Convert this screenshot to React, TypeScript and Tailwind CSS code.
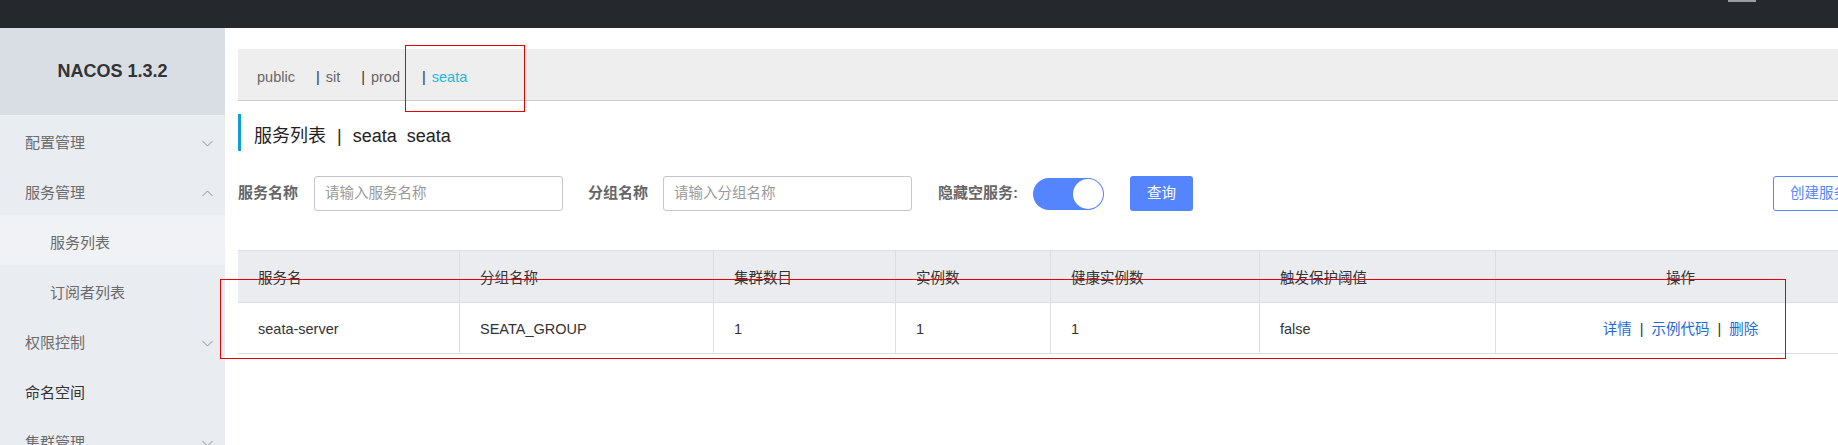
import React from "react";

const FONT = "font-['Liberation_Sans','Noto_Sans_CJK_SC',sans-serif]";

function Chevron({ up = false }: { up?: boolean }) {
  return (
    <svg width="11" height="7" viewBox="0 0 11 7" className="shrink-0">
      <polyline
        points={up ? "0.5,6 5.5,1 10.5,6" : "0.5,1 5.5,6 10.5,1"}
        fill="none"
        stroke="#8a8f99"
        strokeWidth="1"
      />
    </svg>
  );
}

function MenuItem({
  label,
  chevron,
  sub = false,
  active = false,
  dark = false,
}: {
  label: string;
  chevron?: "up" | "down";
  sub?: boolean;
  active?: boolean;
  dark?: boolean;
}) {
  return (
    <div
      className={`flex h-[50px] items-center pt-[6px] pr-[12px] ${sub ? "pl-[50px]" : "pl-[25px]"} ${active ? "bg-[#f1f2f6]" : ""}`}
    >
      <span className={`flex-1 text-[15px] ${dark ? "text-[#333]" : "text-[#6b6b6b]"}`}>
        {label}
      </span>
      {chevron && <Chevron up={chevron === "up"} />}
    </div>
  );
}

const cols = ["服务名", "分组名称", "集群数目", "实例数", "健康实例数", "触发保护阈值", "操作"];
const row = ["seata-server", "SEATA_GROUP", "1", "1", "1", "false"];
const grid =
  "grid grid-cols-[221px_254px_182px_155px_209px_236px_370px]";

export default function App() {
  return (
    <div className={`relative h-[445px] w-[1838px] overflow-hidden bg-white ${FONT}`}>
      {/* top bar */}
      <div className="relative h-[28px] bg-[#25292e]">
        <div className="absolute left-[1728px] top-0 h-[2px] w-[28px] bg-[#9a9c9f]" />
      </div>

      <div className="flex h-[417px]">
        {/* sidebar */}
        <aside className="w-[225px] shrink-0 bg-[#e9ecf1]">
          <div className="flex h-[87px] items-center justify-center bg-[#d9dde4] text-[18px] font-bold text-[#333]">
            NACOS 1.3.2
          </div>
          <MenuItem label="配置管理" chevron="down" />
          <MenuItem label="服务管理" chevron="up" />
          <MenuItem label="服务列表" sub active />
          <MenuItem label="订阅者列表" sub />
          <MenuItem label="权限控制" chevron="down" />
          <MenuItem label="命名空间" dark />
          <MenuItem label="集群管理" chevron="down" />
        </aside>

        {/* main */}
        <main className="w-[1640px] shrink-0 pl-[13px] pt-[21px]">
          {/* namespace tabs */}
          <div className="flex h-[52px] items-center border-b border-[#cccccc] bg-[#eeeeee] pl-[19px] pt-[7px] text-[14.5px]">
            <span className="text-[#666] mr-[21px]">public</span>
            <span className="text-[#333] mr-[6px]">|</span>
            <span className="text-[#666] mr-[21px]">sit</span>
            <span className="text-[#333] mr-[6px]">|</span>
            <span className="text-[#666] mr-[22px]">prod</span>
            <span className="text-[#333] mr-[6px]">|</span>
            <span className="text-[#1fb7da]">seata</span>
          </div>

          {/* title */}
          <div className="mt-[13px] flex h-[37px] items-center border-l-[3px] border-[#0e9fd8] pl-[13px] pt-[8px] text-[18px] text-[#222]">
            <span>服务列表</span>
            <span className="mx-[11px]">|</span>
            <span>seata</span>
            <span className="ml-[10px]">seata</span>
          </div>

          {/* search row */}
          <div className="mt-[25px] flex h-[35px] items-center">
            <span className="w-[76px] shrink-0 text-[15px] font-bold text-[#666]">服务名称</span>
            <div className="flex h-[35px] w-[249px] shrink-0 items-center rounded-[3px] border border-[#c4c6cf] pl-[10px] text-[14.5px] text-[#999]">
              请输入服务名称
            </div>
            <span className="ml-[25px] w-[75px] shrink-0 text-[15px] font-bold text-[#666]">分组名称</span>
            <div className="flex h-[35px] w-[249px] shrink-0 items-center rounded-[3px] border border-[#c4c6cf] pl-[10px] text-[14.5px] text-[#999]">
              请输入分组名称
            </div>
            <span className="ml-[26px] w-[95px] shrink-0 text-[15px] font-bold text-[#666]">隐藏空服务:</span>
            <div className="flex h-[32px] w-[71px] shrink-0 items-center justify-end rounded-full bg-[#5584ff] pr-[1px]">
              <div className="h-[30px] w-[30px] rounded-full bg-white" />
            </div>
            <button className="ml-[26px] h-[35px] w-[63px] shrink-0 rounded-[3px] bg-[#5584ff] text-[14.5px] text-white">
              查询
            </button>
            <button className="ml-[580px] h-[35px] w-[100px] shrink-0 rounded-[3px] border border-[#5584ff] pl-[16px] text-left text-[14.5px] text-[#5584ff]">
              创建服务
            </button>
          </div>

          {/* table */}
          <div className="mt-[39px] w-[1627px] border-t border-[#dcdee3] text-[14.5px] text-[#333]">
            <div className={`${grid} h-[52px] border-b border-[#dcdee3] bg-[#ebecf0]`}>
              {cols.map((c, i) => (
                <div
                  key={c}
                  className={`flex items-center pt-[4px] ${i === 6 ? "justify-center" : "pl-[20px]"} ${i > 0 ? "border-l border-[#dcdee3]" : ""}`}
                >
                  {c}
                </div>
              ))}
            </div>
            <div className={`${grid} h-[51px] border-b border-[#dcdee3]`}>
              {row.map((c, i) => (
                <div
                  key={i}
                  className={`flex items-center pl-[20px] pt-[3px] ${i > 0 ? "border-l border-[#dcdee3]" : ""}`}
                >
                  {c}
                </div>
              ))}
              <div className="flex items-center justify-center border-l border-[#dcdee3] pt-[3px] text-[#1f6ad6]">
                <span>详情</span>
                <span className="mx-[8px] text-[#333]">|</span>
                <span>示例代码</span>
                <span className="mx-[8px] text-[#333]">|</span>
                <span>删除</span>
              </div>
            </div>
          </div>
        </main>
      </div>

      {/* annotation boxes */}
      <div className="pointer-events-none absolute left-[405px] top-[45px] h-[67px] w-[120px] border border-[#e60000]" />
      <div className="pointer-events-none absolute left-[220px] top-[279px] h-[80px] w-[1566px] border border-[#e60000]" />
    </div>
  );
}
